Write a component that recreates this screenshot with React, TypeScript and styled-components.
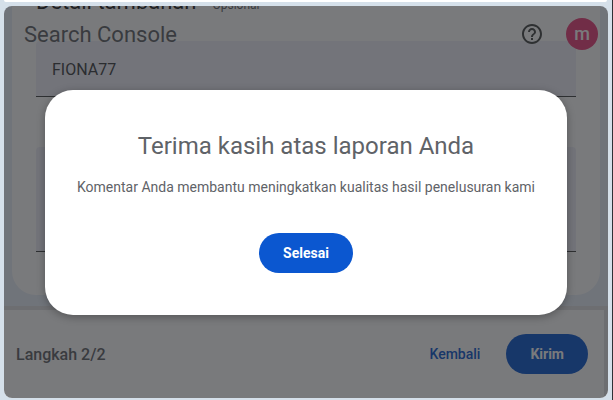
import React from "react";
import styled, { createGlobalStyle } from "styled-components";
import { MdHelpOutline } from "react-icons/md";

const GlobalStyle = createGlobalStyle`
  * { box-sizing: border-box; }
  body { margin: 0; background: #d5e0ea; font-family: Roboto, sans-serif; }
  button, input, textarea { font-family: inherit; }
`;

const Shell = styled.div`
  display: flex;
  flex-direction: column;
  height: 100vh;
  padding-bottom: 2px;
  border-right: 1px solid #303236;
`;

const UpperPanel = styled.div`
  flex: none;
  height: 2px;
  margin: 0 5px 4px 4px;
  background: #ffffff;
  border-radius: 0 0 8px 8px;
`;

const Panel = styled.div`
  position: relative;
  flex: 1;
  min-height: 0;
  display: flex;
  flex-direction: column;
  margin: 0 4px;
  overflow: hidden;
  border-radius: 8px;
  background: #e9f0fa;
`;

const Header = styled.header`
  position: absolute;
  inset: 0 0 auto;
  display: flex;
  align-items: center;
  gap: 22px;
  height: 56px;
  padding: 0 10px 0 20px;
`;

const Product = styled.span`
  flex: 1;
  padding-top: 2px;
  color: #5f6368;
  font-size: 22px;
  line-height: 28px;
`;

const IconButton = styled.button`
  display: flex;
  padding: 0;
  border: 0;
  background: none;
  color: #444746;
`;

const Avatar = styled.button`
  width: 32px;
  height: 32px;
  padding: 0;
  border: 0;
  border-radius: 50%;
  background: #ec407a;
  color: #ffffff;
  font-size: 18px;
  font-weight: 500;
  line-height: 30px;
`;

const Content = styled.main`
  flex: 1;
  min-height: 0;
  display: flex;
  flex-direction: column;
  justify-content: flex-end;
  overflow: hidden;
  padding: 0 8px 11px;
`;

const Card = styled.form`
  flex: none;
  display: flex;
  flex-direction: column;
  padding: 24px 24px 43px;
  border-radius: 24px;
  background: #ffffff;
`;

const CardTitle = styled.label`
  display: flex;
  align-items: baseline;
  gap: 16px;
  margin-bottom: 22px;
  color: #1f1f1f;
  font-size: 22px;
  line-height: 28px;
`;

const Optional = styled.small`
  color: #5f6368;
  font-size: 12px;
`;

const TextField = styled.input`
  height: 56px;
  padding: 2px 16px 0;
  border: 0;
  border-bottom: 1px solid #444746;
  border-radius: 4px 4px 0 0;
  background: #f0f1fa;
  color: #3c4043;
  font-size: 16px;
`;

const TextArea = styled.textarea`
  height: 105px;
  margin-top: 50px;
  padding: 16px;
  border: 0;
  border-bottom: 1px solid #444746;
  border-radius: 4px 4px 0 0;
  background: #f0f1fa;
  font-size: 16px;
  resize: none;
`;

const Footer = styled.footer`
  display: flex;
  align-items: center;
  height: 92px;
  padding: 0 16px 0 12px;
  border-top: 4px solid #e0e0e3;
  border-right: 4px solid #e0e0e3;
  background: #ffffff;
`;

const Step = styled.span`
  flex: 1;
  color: #5f6368;
  font-size: 16px;
  font-weight: 500;
`;

const Button = styled.button<{ $filled?: boolean }>`
  height: 40px;
  padding: 0 24px;
  border: 0;
  border-radius: 20px;
  background: ${(p) => (p.$filled ? "#0b57d0" : "transparent")};
  color: ${(p) => (p.$filled ? "#ffffff" : "#0b57d0")};
  font-size: 14px;
  font-weight: ${(p) => (p.$filled ? 700 : 500)};
`;

const Actions = styled.div`
  display: flex;
  gap: 2px;
`;

const Scrim = styled.div`
  position: absolute;
  inset: 0;
  display: flex;
  align-items: center;
  justify-content: center;
  padding: 0 41px;
  background: rgba(32, 33, 36, 0.6);
`;

const Dialog = styled.section`
  display: flex;
  flex: 1;
  max-width: 560px;
  flex-direction: column;
  align-items: center;
  padding: 40px 24px 42px;
  border-radius: 28px;
  background: #ffffff;
  box-shadow: 0 2px 8px rgba(0, 0, 0, 0.3);
`;

const DialogTitle = styled.h1`
  margin: 0 0 15px;
  color: #5f6368;
  font-size: 24px;
  font-weight: 400;
  line-height: 32px;
`;

const DialogText = styled.p`
  margin: 0 0 36px;
  color: #5f6368;
  font-size: 14px;
  line-height: 20px;
  text-align: center;
`;

export default function App() {
  return (
    <Shell>
      <GlobalStyle />
      <UpperPanel />
      <Panel>
        <Content>
          <Card>
            <CardTitle htmlFor="query">
              Detail tambahan <Optional>Opsional</Optional>
            </CardTitle>
            <TextField id="query" defaultValue="FIONA77" />
            <TextArea aria-label="Detail tambahan" />
          </Card>
        </Content>
        <Footer>
          <Step>Langkah 2/2</Step>
          <Actions>
            <Button type="button">Kembali</Button>
            <Button type="button" $filled>Kirim</Button>
          </Actions>
        </Footer>
        <Header>
          <Product>Search Console</Product>
          <IconButton type="button" aria-label="Bantuan">
            <MdHelpOutline size={24} />
          </IconButton>
          <Avatar type="button">m</Avatar>
        </Header>
        <Scrim>
          <Dialog role="dialog" aria-modal="true" aria-labelledby="dialog-title">
            <DialogTitle id="dialog-title">Terima kasih atas laporan Anda</DialogTitle>
            <DialogText>Komentar Anda membantu meningkatkan kualitas hasil penelusuran kami</DialogText>
            <Button type="button" $filled>Selesai</Button>
          </Dialog>
        </Scrim>
      </Panel>
    </Shell>
  );
}
